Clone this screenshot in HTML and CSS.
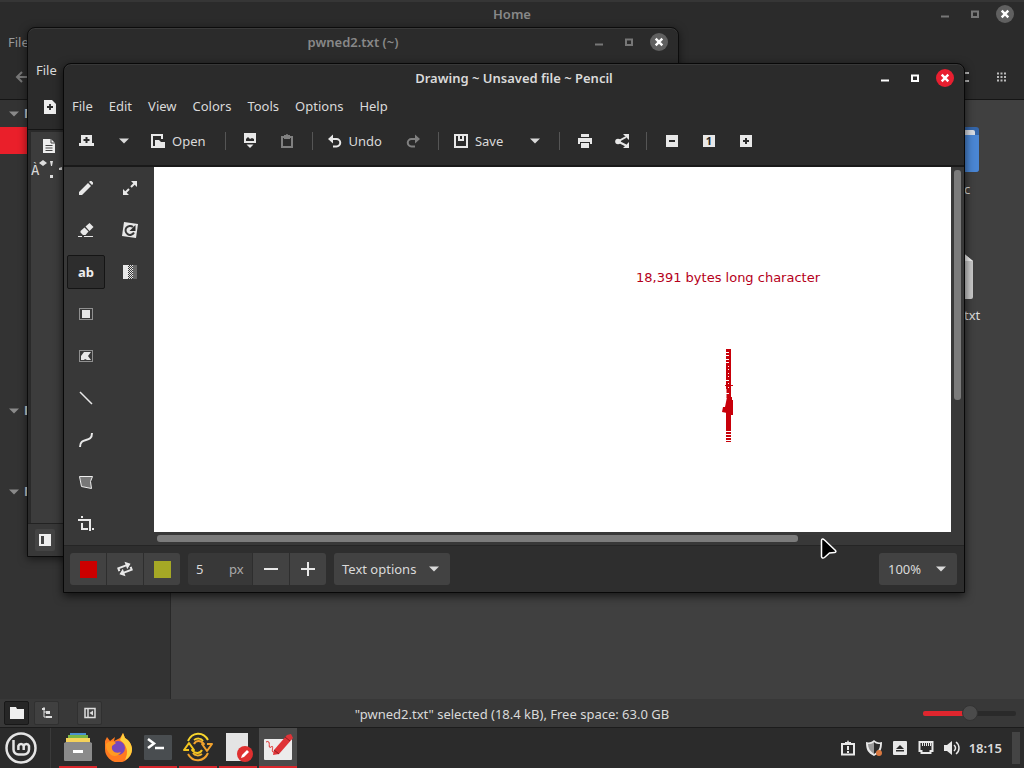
FILE: index.html
```html
<!DOCTYPE html>
<html lang="en">
<head>
<meta charset="utf-8">
<title>Desktop</title>
<link rel="stylesheet" href="styles.css">
</head>
<body>
<svg class="defs" aria-hidden="true">
  <symbol id="min" viewBox="0 0 18 18"><path d="M5 10.500h8v2H5z" fill="currentColor"/></symbol>
  <symbol id="max" viewBox="0 0 18 18"><path d="M6 6.500h6v5.500H6z" fill="none" stroke="currentColor" stroke-width="2"/></symbol>
  <symbol id="close" viewBox="0 0 18 18"><circle class="disc" cx="9" cy="9" r="9"/><path d="M5.700 5.700l6.600 6.600M12.300 5.700l-6.600 6.600" stroke="#fff" stroke-width="2.400"/></symbol>
  <symbol id="caret" viewBox="0 0 10 6"><path d="M0 0.500h10L5 5.500z" fill="currentColor"/></symbol>
</svg>

<main class="desktop">
  <section class="window home" aria-label="Home">
    <header class="titlebar"><h1>Home</h1>
      <div class="controls"><button aria-label="Minimize"><svg><use href="#min"/></svg></button><button aria-label="Maximize"><svg><use href="#max"/></svg></button><button aria-label="Close"><svg><use href="#close"/></svg></button></div>
    </header>
    <nav class="menubar"><button>File</button></nav>
    <div class="home-tools">
      <button aria-label="Back"><svg width="14" height="14"><path d="M7 2L2 7l5 5M2 7h12" fill="none" stroke="#777" stroke-width="2"/></svg></button>
      <span class="grow"></span>
      <button aria-label="List view"><svg width="14" height="12"><path d="M0 1h2v2H0zM4 1h7v2H4zM8 1h3v2H8zM0 5h2v2H0zM0 9h2v2H0zM4 9h7v2H4z" fill="#bbb"/></svg></button>
      <button aria-label="Compact view"><svg width="10" height="12"><path d="M1 2.500h9M1 6h9M1 9.500h9" stroke="#bbb" stroke-width="2" stroke-dasharray="2 1.500"/></svg></button>
    </div>
    <div class="home-body">
      <aside class="places">
        <h2 class="place-head first"><svg class="caret"><use href="#caret"/></svg>M</h2>
        <div class="place-selected"></div>
        <h2 class="place-head devices"><svg class="caret"><use href="#caret"/></svg>D</h2>
        <h2 class="place-head network"><svg class="caret"><use href="#caret"/></svg>N</h2>
      </aside>
      <div class="files">
        <div class="file"><svg width="48" height="48"><rect x="0" y="1" width="48" height="45" rx="3" fill="#3465a8"/><rect x="20" y="4" width="24" height="10" rx="2" fill="#d8dde4"/><path d="M0 9h48v34a3 3 0 0 1-3 3H3a3 3 0 0 1-3-3z" fill="#4a86d4"/></svg><span>c</span></div>
        <div class="file"><svg width="48" height="48"><path d="M6 0h25l11 9v36a2 2 0 0 1-2 2H8a2 2 0 0 1-2-2z" fill="#c9c9c9"/><path d="M31 0l11 9H31z" fill="#f2f2f2"/></svg><span>txt</span></div>
      </div>
    </div>
    <footer class="statusbar">
      <div class="status-buttons">
        <button class="pressed" aria-label="Places"><svg width="16" height="14"><path d="M1 1h6l1 2h7v10H1z" fill="#eee"/></svg></button>
        <button aria-label="Tree"><svg width="12" height="12"><path d="M3 0v10h3M3 5h3" fill="none" stroke="#ddd" stroke-width="1"/><path d="M1 1h3v2H1zM5 4h4v3H5zM5 9h6v2H5z" fill="#ddd"/></svg></button>
        <button class="apart" aria-label="Close sidebar"><svg width="12" height="12"><path d="M1 1.500h10v9H1zM4 1v10" fill="none" stroke="#ddd" stroke-width="1.500"/><path d="M9 3.500v5L5.500 6z" fill="#ddd"/></svg></button>
      </div>
      <p>"pwned2.txt" selected (18.4 kB), Free space: 63.0 GB</p>
      <div class="zoom"><input type="range" min="0" max="100" value="50" aria-label="Icon size"></div>
    </footer>
  </section>

  <section class="window editor" aria-label="Text editor">
    <header class="titlebar"><h1>pwned2.txt (~)</h1>
      <div class="controls"><button aria-label="Minimize"><svg><use href="#min"/></svg></button><button aria-label="Maximize"><svg><use href="#max"/></svg></button><button aria-label="Close"><svg><use href="#close"/></svg></button></div>
    </header>
    <nav class="menubar"><button>File</button></nav>
    <div class="editor-tools"><button aria-label="New"><svg width="14" height="16"><path d="M1 1h8l4 4v10H1z" fill="#eee"/><path d="M7 5v6M4 8h6" stroke="#2b2b2b" stroke-width="1.800"/></svg></button></div>
    <div class="editor-body">
      <div class="editor-tab"><svg width="14" height="16"><path d="M1 1h8l4 4v10H1z" fill="#eee"/><path d="M9 1v4h4M3.500 7.500h7M3.500 10h7M3.500 12.500h7" fill="none" stroke="#444" stroke-width="1"/></svg></div>
      <div class="editor-text">À<svg width="28" height="20"><path d="M4 0l4 3-4 3-4-3zM11 1h3l-1 5h-1zM11 15h3v3h-3zM20 8l3-1v3h-3z" fill="#ddd"/></svg></div>
    </div>
    <footer class="editor-status"><button aria-label="Side panel"><svg width="12" height="12"><rect x="1" y="1" width="10" height="10" fill="none" stroke="#eee" stroke-width="2"/><path d="M5 1h6v10H5z" fill="#eee"/></svg></button></footer>
  </section>

  <section class="window drawing" aria-label="Drawing">
    <header class="titlebar"><h1>Drawing ~ Unsaved file ~ Pencil</h1>
      <div class="controls"><button aria-label="Minimize"><svg><use href="#min"/></svg></button><button aria-label="Maximize"><svg><use href="#max"/></svg></button><button aria-label="Close"><svg><use href="#close"/></svg></button></div>
    </header>
    <nav class="menubar"><button>File</button><button>Edit</button><button>View</button><button>Colors</button><button>Tools</button><button>Options</button><button>Help</button></nav>
    <div class="toolbar" role="toolbar">
      <button aria-label="New image"><svg class="icon"><path d="M2 2h11v8h2v3H0v-3h2z"/><path class="cut" d="M7.500 4v6M4.500 7h6"/></svg></button>
      <button aria-label="More new options"><svg class="caret"><use href="#caret"/></svg></button>
      <button class="labelled"><svg class="icon"><path d="M1 1h12v5h-2V3H3v10h2v2H1z"/><path d="M5 7h4l2 2h4v6H5z"/></svg>Open</button>
      <i class="sep"></i>
      <button aria-label="Import"><svg class="icon"><path d="M2 0h12v10H2z"/><path d="M4.500 11.500h7L8 15z"/><path class="cutfill" d="M4 8V6l2-2 2 2 2-1 2 1v2z"/></svg></button>
      <button class="off" aria-label="Paste"><svg class="icon"><path class="line" d="M3 4h10v10H3z"/><path d="M5 2h2a1 1 0 0 1 2 0h2v4H5z"/></svg></button>
      <i class="sep"></i>
      <button class="labelled"><svg class="icon"><path class="line" d="M4 6h5.500a3.700 3.700 0 0 1 0 7.500H6"/><path d="M1 6l5-4.500v9z"/></svg>Undo</button>
      <button class="off" aria-label="Redo"><svg class="icon"><path class="line" d="M12 6H6.500a3.700 3.700 0 0 0 0 7.500H10"/><path d="M15 6l-5-4.500v9z"/></svg></button>
      <i class="sep"></i>
      <button class="labelled"><svg class="icon"><path class="line" d="M2 2h12v12H2z"/><path d="M5 2h2v4h2V2h2v6H5z"/></svg>Save</button>
      <button aria-label="More save options"><svg class="caret"><use href="#caret"/></svg></button>
      <i class="sep"></i>
      <button aria-label="Print"><svg class="icon"><path d="M4 1h8v3H4zM1 5h14v6h-2V9H3v2H1zM4 10h8v5H4z"/></svg></button>
      <button aria-label="Share"><svg class="icon"><path class="line" d="M12 4L4 8.500l8 4"/><path d="M9 1h6v6zM15 9v6H9z"/><circle cx="4" cy="8.500" r="2.800"/></svg></button>
      <i class="sep"></i>
      <button aria-label="Zoom out"><svg class="icon"><path d="M2 2h12v12H2z"/><path class="cut" d="M5 8h6"/></svg></button>
      <button aria-label="Original size"><svg class="icon"><path d="M2 2h12v12H2z"/><text class="one" x="8" y="12" text-anchor="middle">1</text></svg></button>
      <button aria-label="Zoom in"><svg class="icon"><path d="M2 2h12v12H2z"/><path class="cut" d="M8 5v6M5 8h6"/></svg></button>
    </div>
    <div class="workspace">
      <aside class="tools">
        <button aria-label="Pencil"><svg class="icon"><path d="M1 15v-3l9-9 3 3-9 9zM11 2l1-1 1.500 0L15 2.500V4l-1 1z"/></svg></button>
        <button aria-label="Scale"><svg class="icon"><path class="line" d="M9 7l4-4M7 9l-4 4"/><path d="M9 1h6v6zM1 9v6h6z"/></svg></button>
        <button aria-label="Eraser"><svg class="icon"><path d="M7.500 4.500l4-3.500 4 4-4 4zM6.500 5.500l4 4-3 3.500H5L2.500 10.500V9zM0 14h4v1H0zM6 14h9v1H6z"/></svg></button>
        <button aria-label="Rotate"><svg class="icon"><path d="M2 0l14 2-2 14L0 14z"/><path class="cut" d="M12 10.500a4.500 4.500 0 1 1-1-5.500"/><path class="cutfill" d="M13.500 3v6H7.500z"/></svg></button>
        <button class="active">ab</button>
        <button aria-label="Filters"><svg class="icon"><path d="M1 1h5v14H1z"/><path d="M6.500 1v14M8.500 1v14M10.500 1v14" stroke="#eee" stroke-dasharray="1 1"/><path d="M7.500 2v13M9.500 2v13" stroke="#ddd" stroke-dasharray="1 1"/><path d="M11 1h4v14h-4z" fill="#666"/></svg></button>
        <button aria-label="Rectangle selection"><svg class="icon"><path class="dots" d="M1.500 2.500h13v11h-13z"/><path d="M4 4h8v8H4z"/></svg></button>
        <i></i>
        <button aria-label="Free selection"><svg class="icon"><path class="dots" d="M1.500 2.500h13v11h-13z"/><path d="M3 12V8l3-4h7l-3 4 3 4H9l-2-1-1 1z"/></svg></button>
        <i></i>
        <button aria-label="Line"><svg class="icon"><path class="line thin" d="M2 2l12 12"/></svg></button>
        <i></i>
        <button aria-label="Curve"><svg class="icon"><path class="line" d="M2 15c0-11 12-3 12-14"/></svg></button>
        <i></i>
        <button aria-label="Shape"><svg class="icon"><path d="M1.500 2.500h13l-2 5 1 7-10-2z" fill="#777" stroke="#eee"/></svg></button>
        <i></i>
        <button aria-label="Crop"><svg class="icon"><path d="M0 3h13v12h-2V5H0zM3 7h2v5h5v2H3zM3 0h2v2H3zM14 12h2v2h-2z"/></svg></button>
      </aside>
      <div class="canvas-area">
        <svg class="canvas" role="img" aria-label="Canvas">
          <text x="482" y="115">18,391 bytes long character</text>
          <g fill="none" stroke="#c8000a">
            <path d="M574.500 182v40" stroke-width="5" stroke-dasharray="3 1 2 1"/>
            <path d="M576 183v50" stroke-width="2"/>
            <path d="M573 196v26" stroke-width="2" stroke-dasharray="5 1"/>
            <path d="M574.500 222v10" stroke-width="4" stroke-dasharray="4 1"/>
            <path d="M574.500 245v17" stroke-width="5"/>
            <path d="M574.500 262v13" stroke-width="5" stroke-dasharray="2 1"/>
          </g>
          <path d="M573 230h5v3h1v15h-2v6h-4v-8l-5-1 1-5h2z" fill="#c8000a"/>
          <path d="M571 218.500h8" stroke="#c8000a"/>
        </svg>
        <div class="vscroll"><span></span></div>
        <div class="hscroll"><span></span></div>
      </div>
    </div>
    <footer class="options">
      <div class="group">
        <button aria-label="Main color"><span class="swatch main"></span></button>
        <button aria-label="Exchange colors"><svg class="icon"><g transform="rotate(-20 8 8)"><path class="line" d="M2 8V5h9M14 8v3H5"/><path d="M10 1l5 4-5 4zM6 7l-5 4 5 4z"/></g></svg></button>
        <button aria-label="Second color"><span class="swatch second"></span></button>
      </div>
      <div class="group">
        <label class="size"><input type="text" value="5" aria-label="Tool width"><span>px</span></label>
        <button aria-label="Decrease"><svg class="icon"><path d="M1 7h14v2H1z"/></svg></button>
        <button aria-label="Increase"><svg class="icon"><path d="M1 7h14v2H1zM7 1h2v14H7z"/></svg></button>
      </div>
      <button class="text-options">Text options<svg class="caret"><use href="#caret"/></svg></button>
      <span class="grow"></span>
      <div class="zoom-select"><select aria-label="Zoom level"><option>100%</option></select><svg class="caret"><use href="#caret"/></svg></div>
    </footer>
  </section>
  <svg class="pointer" width="20" height="24" aria-hidden="true"><path d="M2.500 3.500c0-2 1.500-2 3-.5l11 10.500c1 1 0 2-1 2l-5 .500-5 4.500c-1.500 1-3 .5-3-1z" fill="#000" stroke="#fff" stroke-width="1.500"/></svg>
</main>

<footer class="taskbar">
  <button class="start" aria-label="Menu"><svg width="34" height="34"><g fill="none" stroke="#e4e4e4"><circle cx="17" cy="17" r="14.500" stroke-width="2.500"/><path d="M9.500 9v9.500a5 5 0 0 0 5 5h5.500a5 5 0 0 0 5-5V15a2.800 2.800 0 0 0-5.300 0v4M19.700 15a2.800 2.800 0 0 0-5.300 0v4" stroke-width="2.500"/></g></svg></button>
  <div class="apps">
    <button class="running" aria-label="Files"><svg width="30" height="30"><path d="M7 1h16v5H7z" fill="#4a90d0"/><path d="M5 3h20v4H5z" fill="#7ab648"/><path d="M3 6h24v5H3z" fill="#f5d25a"/><path d="M1 11l2-1h24l2 1v17a1 1 0 0 1-1 1H2a1 1 0 0 1-1-1z" fill="#8b8b8b"/><path d="M10 18h10v3H10z" fill="#fff"/></svg></button>
    <button aria-label="Firefox"><svg width="30" height="30"><path d="M2 9l2-4 3 4 5-4-1 4 6-3 3-5 2 5c4 2 7 7 7 11a13.500 13.500 0 0 1-27 0c0-3 0-6 0-8z" fill="#ff7a20"/><path d="M20 1l2 5c4 2 7 7 7 11 0 5-3 9-7 11 4-8 2-15-5-20z" fill="#ffd03c"/><circle cx="15" cy="16" r="7" fill="#7748bc"/><path d="M3 12c3-3 7-3 10-1l-4 3c-1 5 3 8 9 6-3 5-9 5-12 1S3 15 3 12z" fill="#ff9a22"/></svg></button>
    <button class="running" aria-label="Terminal"><svg width="30" height="30"><rect x="1" y="3" width="28" height="25" rx="1" fill="#494d50"/><path d="M5 7l6 4.500L5 16M12 16h9" fill="none" stroke="#fff" stroke-width="2.500"/></svg></button>
    <button class="running" aria-label="Sync"><svg width="32" height="30"><g fill="none" stroke-linejoin="round" stroke-width="2"><path d="M7 18H2l5-7 5 7h-2c3 4 8 4 10 0" stroke="#f3c61f"/><path d="M6 9C10 0 21-1 26 8" stroke="#f8d62d"/><path d="M12 8c3-2 7-2 9 1" stroke="#f5ce2b"/><path d="M25 12h5l-5 7-5-7h2c-3-4-8-4-10 0" stroke="#f0a12d"/><path d="M26 21c-4 9-15 10-20 1" stroke="#f0a12d"/><path d="M20 22c-3 2-7 2-9-1" stroke="#f3b32b"/></g></svg></button>
    <button class="running" aria-label="Text editor"><svg width="30" height="30"><path d="M3 1h22v28H3z" fill="#e4e4e4"/><circle cx="22" cy="22" r="8" fill="#df2f2f"/><path d="M18 26l1-3 5-5 2 2-5 5z" fill="#fff"/></svg></button>
    <button class="running focused" aria-label="Drawing"><svg width="32" height="30"><rect x="2" y="7" width="28" height="21" rx="1" fill="#ececec"/><path d="M4 10c6-3 1 8 5 5s-1 6 3 5l3-1" fill="none" stroke="#df2f2f"/><path d="M12 18L25 3l4-1 2 4-14 16-6 1z" fill="#df3337"/><path d="M12 18l5 4M23 5l5 4" stroke="#8c2022"/></svg></button>
  </div>
  <div class="tray">
    <button aria-label="Reports"><svg class="icon"><path class="line" d="M2 4h12v10.500H2z"/><path d="M5 2h2l1-2 1 2h2v3H5zM7 6h2v4H7zM7 11h2v2H7z"/></svg></button>
    <button aria-label="Updates"><svg class="icon"><path d="M0 2c3 1 6 0 8-2 2 2 5 3 8 2 0 8-2 11-8 14C2 13 0 10 0 2z"/><path class="cutfill" d="M8 2c2 2 4 2 6 2 0 5-2 7-6 10z"/><path d="M2 4c2 0 4 0 6-2v12C4 11 2 8 2 4z" fill="#999"/><circle cx="13" cy="13" r="3" fill="#d97840"/></svg></button>
    <button aria-label="Removable drives"><svg class="icon"><rect x="1" y="1" width="14" height="14" rx="1"/><path class="cutfill" d="M4 9l4-4 4 4zM4 10h8v1.500H4z"/></svg></button>
    <button aria-label="Network"><svg class="icon"><path class="line" d="M1.500 2h13v9h-2v2h-9v-2h-2z"/><path d="M4 3h1v3H4zM6 3h1v3H6zM8 3h1v3H8zM10 3h1v3h-1zM12 3h1v3h-1z"/></svg></button>
    <button aria-label="Volume"><svg class="icon"><path d="M0 5h3l5-4v14l-5-4H0z"/><path class="line thin" d="M10 5c2 2 2 4 0 6M12 2c4 3 4 9 0 12"/></svg></button>
    <time>18:15</time>
    <button class="show-desktop" aria-label="Show desktop"></button>
  </div>
</footer>
</body>
</html>
```
FILE: styles.css
```css
* { box-sizing: border-box; }
body {
  margin: 0;
  height: 100vh;
  display: flex;
  flex-direction: column;
  overflow: hidden;
  background: #2b2b2b;
  color: #dadada;
  font: 13px/20px "Noto Sans", "Open Sans", sans-serif;
}
button, input, select { font: inherit; color: inherit; border: 0; padding: 0; margin: 0; background: none; }
button { display: flex; align-items: center; justify-content: center; }
h1, h2, p { margin: 0; font-size: 13px; }
svg { display: block; flex: none; }
.defs { position: absolute; width: 0; height: 0; }
.grow { flex: 1; }
.caret { width: 10px; height: 6px; }
.icon { width: 16px; height: 16px; fill: #e8e8e8; }
.icon .line { fill: none; stroke: #e8e8e8; stroke-width: 2; }
.icon .thin { stroke-width: 1.5; }
.icon .cut { fill: none; stroke: #2b2b2b; stroke-width: 2; }
.icon .cutfill { fill: #2b2b2b; }
.icon .dots { fill: none; stroke: #e8e8e8; stroke-dasharray: 1 1; }
.icon .one { fill: #2b2b2b; font-size: 11px; font-weight: 700; }
.off .icon { opacity: .45; }

.desktop { flex: 1; min-height: 0; position: relative; display: flex; }
.window { --disc: #606060; display: flex; flex-direction: column; background: #2b2b2b; }
.titlebar { height: 28px; flex: none; display: grid; grid-template-columns: 1fr auto 1fr; align-items: center; }
.titlebar h1 { grid-column: 2; font-weight: 600; line-height: 28px; color: #888; }
.controls { display: flex; justify-content: flex-end; gap: 12px; padding-right: 10px; color: #777; }
.controls svg { width: 18px; height: 18px; }
.disc { fill: var(--disc); }
.menubar { height: 28px; flex: none; display: flex; gap: 16px; padding-left: 8px; }

.home { flex: 1; min-width: 0; box-shadow: inset 0 2px #363636; }
.home .menubar { color: #9a9a9a; }
.home-tools { height: 44px; flex: none; display: flex; align-items: center; gap: 24px; padding: 0 18px 2px 15px; border-bottom: 1px solid #151515; }
.home-body { flex: 1; min-height: 0; display: flex; background: #404040; }
.places { width: 171px; background: #333; border-right: 1px solid #282828; }
.place-head { height: 27px; display: flex; align-items: center; gap: 5px; padding-left: 9px; color: #ccc; line-height: 27px; }
.place-head .caret { color: #8a8a8a; }
.place-selected { height: 27px; background: #ea1f2a; }
.devices { margin-top: 243px; }
.network { margin-top: 54px; }
.files { flex: 1; display: flex; flex-direction: column; align-items: flex-end; gap: 54px; padding: 26px 30px 0 0; }
.file { width: 30px; height: 72px; }
.file svg { margin-left: -33px; }
.file span { display: block; margin-top: 5px; }
.statusbar { height: 29px; flex: none; display: grid; grid-template-columns: 1fr auto 1fr; align-items: center; background: #383838; border-bottom: 1px solid #1c1c1c; }
.statusbar p { font-weight: 400; padding-top: 2px; }
.status-buttons { display: flex; gap: 5px; padding-left: 4px; }
.status-buttons button { width: 25px; height: 24px; border: 1px solid #303030; background: #404040; border-radius: 2px; }
.status-buttons .pressed { background: #262626; border-color: #181818; }
.status-buttons .apart { margin-left: 13px; }
.zoom { display: flex; justify-content: flex-end; padding-right: 8px; }
.zoom input { appearance: none; width: 93px; height: 16px; }
.zoom input::-webkit-slider-runnable-track { height: 5px; border-radius: 2px; background: linear-gradient(90deg, #e0262e 50%, #2a2a2a 50%); }
.zoom input::-webkit-slider-thumb { appearance: none; width: 16px; height: 16px; margin-top: -6px; border-radius: 50%; background: #4b4b4b; border: 1px solid #333; }

.editor { position: absolute; inset: 27px 345px 171px 27px; border: 1px solid #0c0c0c; border-radius: 8px 8px 0 0; box-shadow: 0 2px 8px #0008, inset 0 1px #3a3a3a; }
.editor-tools { height: 46px; flex: none; display: flex; padding-left: 15px; border-bottom: 1px solid #151515; }
.editor-body { flex: 1; margin-left: 2px; border: solid #2a2a2a; border-width: 2px 0 0 1px; background: #3c3c3c; }
.editor-tab { height: 28px; display: flex; align-items: center; padding-left: 11px; }
.editor-text { display: flex; font: 14px/20px "DejaVu Sans Mono", monospace; }
.editor-status { height: 33px; flex: none; display: flex; align-items: center; padding-left: 7px; background: #383838; border-top: 1px solid #222; }
.editor-status button { width: 20px; height: 22px; background: #444; border-radius: 2px; }

.drawing { --disc: #e81f30; position: absolute; inset: 63px 59px 135px 63px; border: 1px solid #080808; border-radius: 8px 8px 0 0; box-shadow: 0 3px 10px #000a, inset 0 1px #383838; }
.drawing .titlebar h1 { color: #dadada; }
.drawing .controls { color: #fff; }
.drawing .menubar { align-items: center; }
.toolbar { height: 47px; flex: none; display: flex; align-items: center; padding: 0 4px 4px; border-bottom: 2px solid #191919; }
.toolbar button { width: 37px; height: 34px; }
.toolbar .labelled { width: auto; gap: 6px; padding: 0 13px 0 8px; }
.sep { width: 13px; height: 18px; background: linear-gradient(#555, #555) center / 1px 100% no-repeat; }
.workspace { flex: 1; min-height: 0; display: flex; background: #383838; }
.tools { width: 90px; flex: none; display: grid; grid-template-columns: 38px 38px; grid-auto-rows: 34px; gap: 8px 6px; padding: 4px 3px 0; overflow: hidden; }
.tools .cut { stroke: #383838; }
.tools .active { border: 1px solid #151515; border-radius: 2px; background: #2d2d2d; font-weight: 700; color: #eee; }
.canvas-area { flex: 1; min-width: 0; display: grid; grid-template: 1fr 13px / 1fr 13px; }
.canvas { width: 100%; height: 100%; background: #fff; }
.canvas text { font: 13px "DejaVu Sans", sans-serif; fill: #b5001a; }
.vscroll { padding: 3px; }
.vscroll span { display: block; height: 64%; border-radius: 3px; background: #7b7b7b; }
.hscroll { padding: 3px; }
.hscroll span { display: block; width: 81%; height: 7px; border-radius: 3px; background: #7b7b7b; }
.options { height: 47px; flex: none; display: flex; align-items: center; gap: 8px; padding: 0 7px 0 6px; background: #2e2e2e; border-top: 1px solid #252525; }
.group { display: flex; gap: 1px; border-radius: 3px; overflow: hidden; }
.group button { width: 36px; height: 32px; background: #424242; }
.swatch { width: 17px; height: 17px; }
.main { background: #cc0000; }
.second { background: #a5a825; }
.size { width: 64px; height: 32px; display: flex; align-items: center; padding: 0 9px 0 8px; background: #383838; }
.size input { width: 33px; flex: none; }
.size span { color: #aaa; }
.text-options { height: 32px; gap: 13px; padding: 0 11px 0 8px; background: #424242; border-radius: 3px; }
.zoom-select { position: relative; }
.zoom-select select { appearance: none; display: block; width: 78px; height: 32px; padding: 0 28px 0 9px; background: #424242; border-radius: 3px; }
.zoom-select .caret { position: absolute; right: 11px; top: 13px; pointer-events: none; }
.pointer { position: absolute; left: 819px; top: 537px; }

.taskbar { height: 40px; flex: none; display: flex; align-items: center; background: #2b2b2b; }
.start { width: 51px; height: 40px; padding-right: 9px; border-right: 1px solid #3a3a3a; }
.apps { display: flex; gap: 2px; padding-left: 8px; }
.apps button { width: 38px; height: 40px; border-bottom: 2px solid transparent; }
.apps .running { border-color: #d9262c; }
.apps .focused { background: #4b4b4b; }
.tray { margin-left: auto; display: flex; align-items: center; gap: 10px; padding-right: 4px; }
.tray time { font-weight: 600; margin-left: -1px; }
.tray .show-desktop { width: 8px; height: 32px; background: #444; }
```
